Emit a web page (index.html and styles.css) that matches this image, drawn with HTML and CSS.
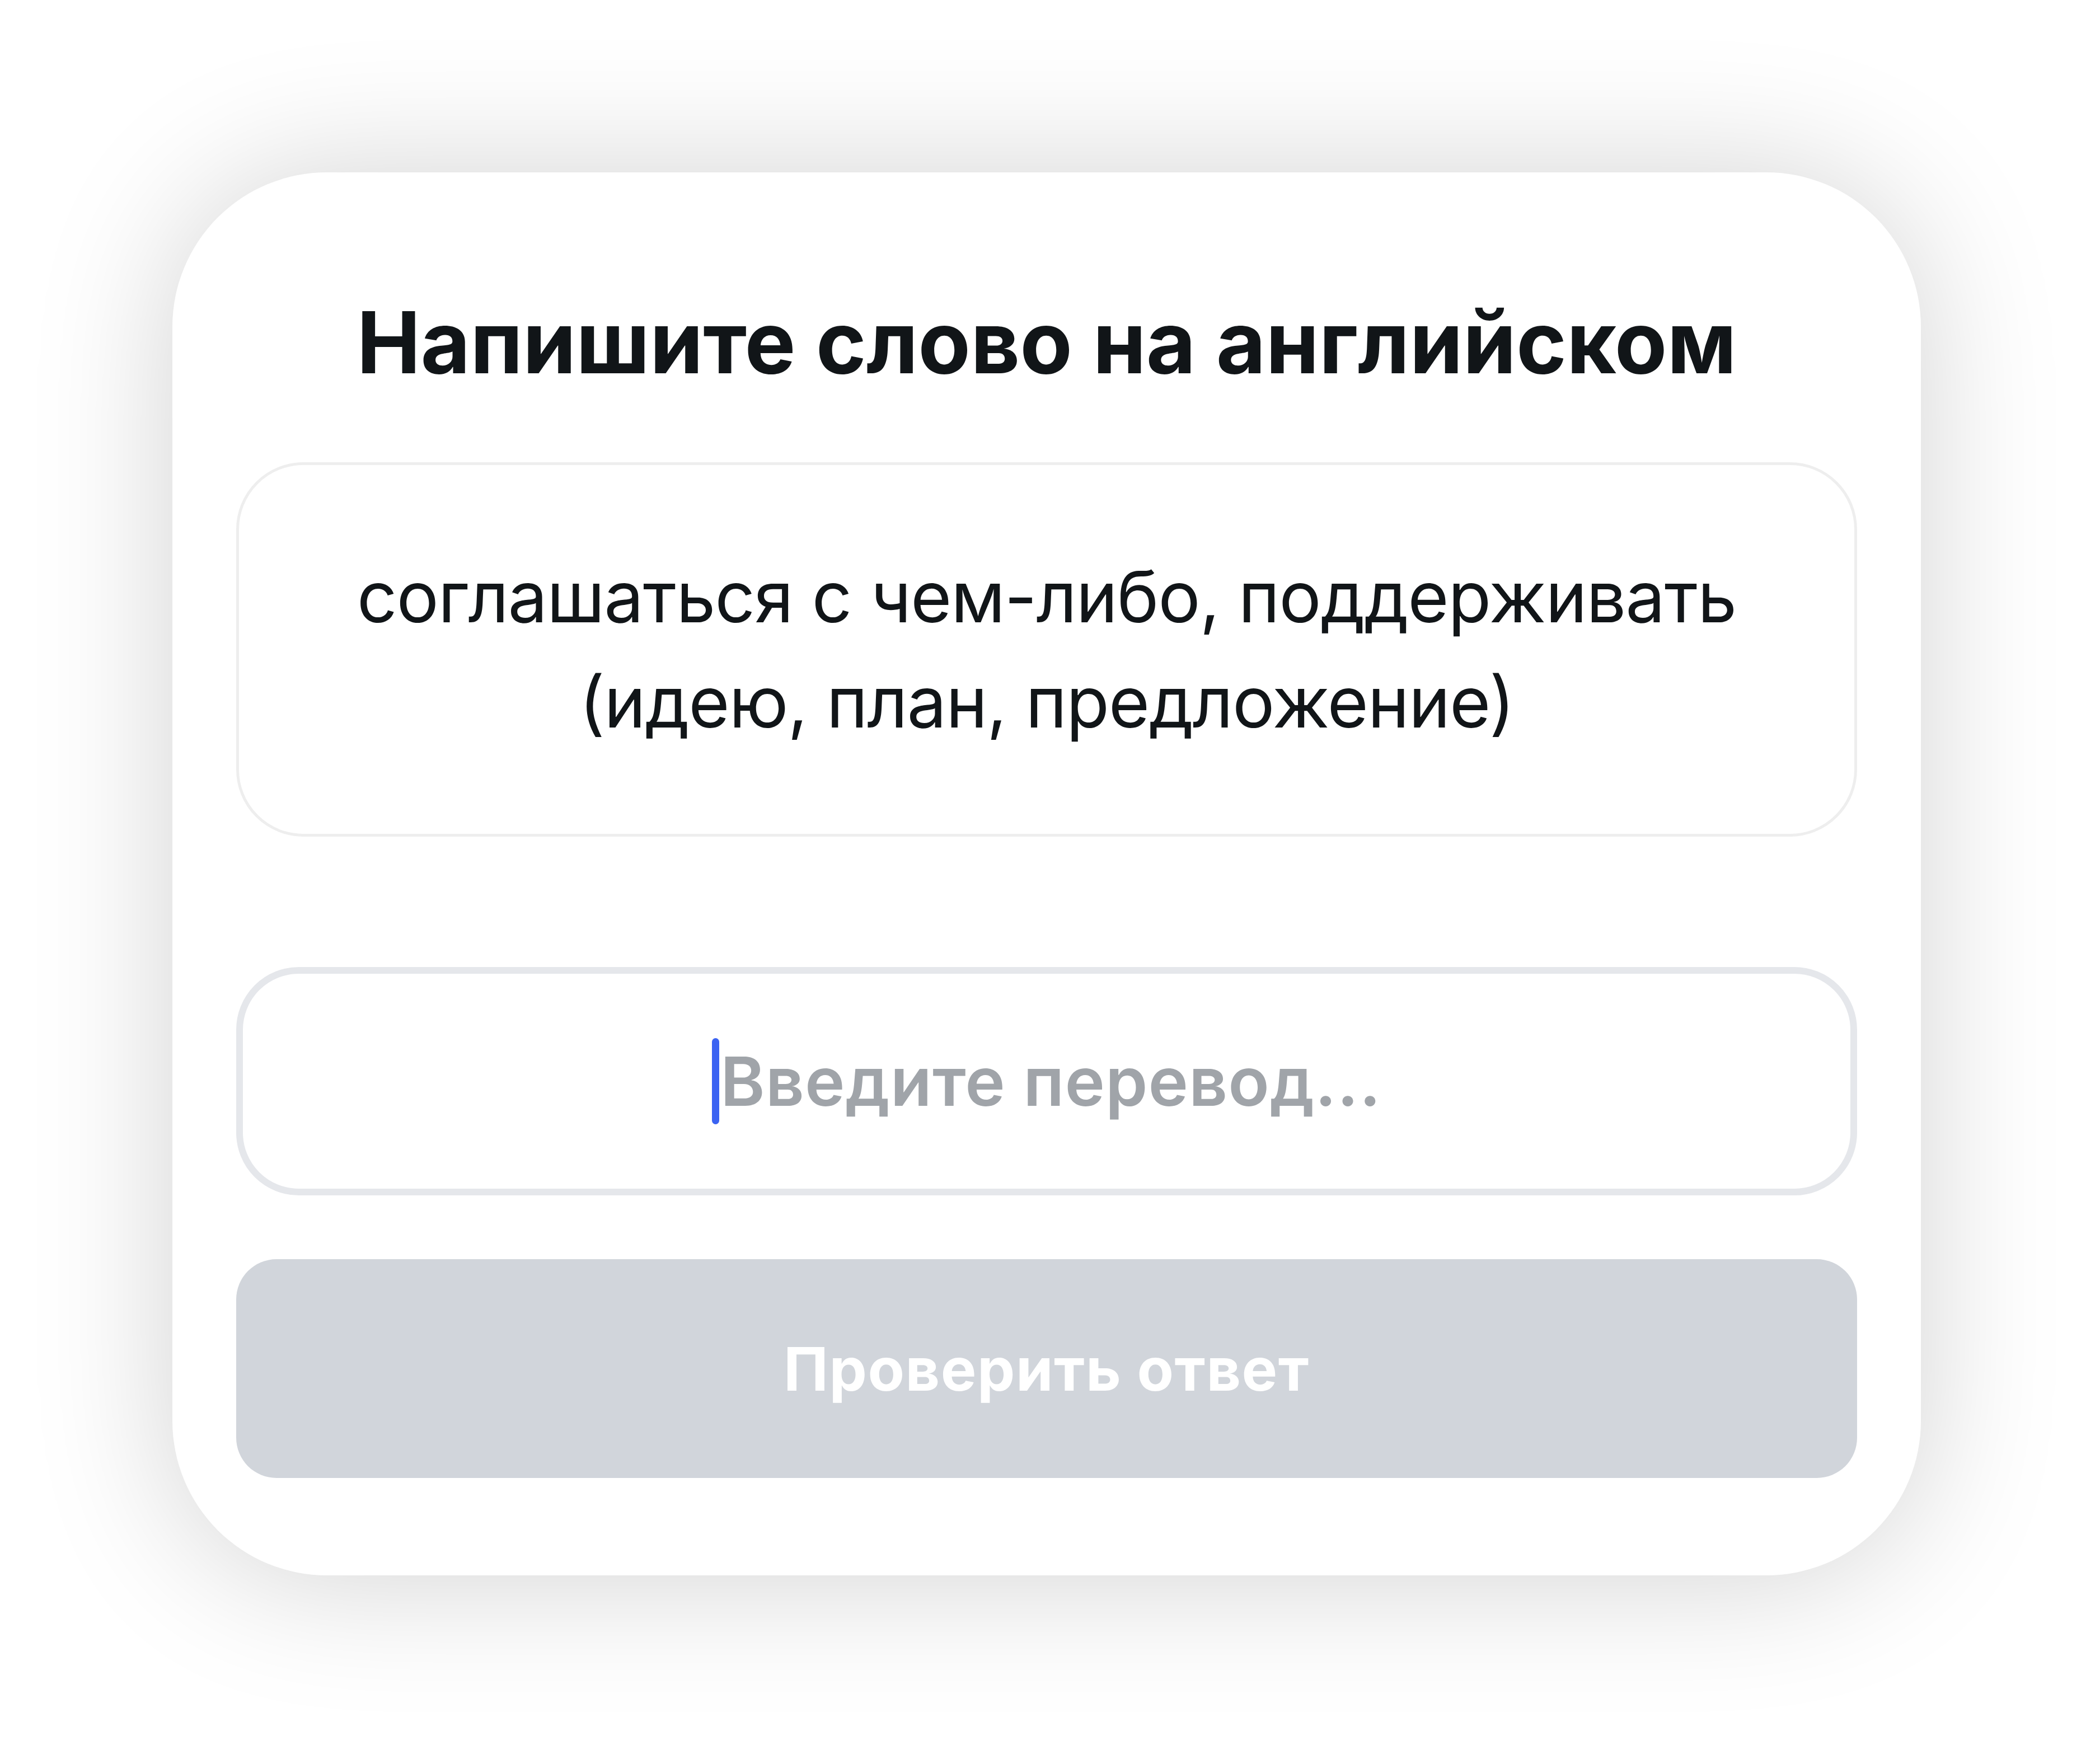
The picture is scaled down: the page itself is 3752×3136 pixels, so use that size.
FILE: index.html
```html
<!DOCTYPE html>
<html lang="ru">
<head>
<meta charset="utf-8">
<title>Напишите слово на английском</title>
<link rel="stylesheet" href="styles.css">
</head>
<body>
<main class="card">
  <h1 class="title">Напишите слово на английском</h1>
  <div class="prompt">
    <p class="prompt-text">соглашаться с чем-либо, поддерживать (идею, план, предложение)</p>
  </div>
  <div class="answer">
    <span class="caret"></span><span class="placeholder">Введите перевод...</span>
  </div>
  <button class="check" type="button">Проверить ответ</button>
</main>
</body>
</html>
```

FILE: styles.css
```css
html, body {
  margin: 0;
  padding: 0;
  background: #ffffff;
}

body {
  width: 3752px;
  height: 3136px;
  padding: 308px 0 0 308px;
  box-sizing: border-box;
  font-family: Inter, "Noto Sans", "Liberation Sans", sans-serif;
  color: #111518;
  overflow: hidden;
}

.card {
  width: 3124px;
  height: 2507px;
  box-sizing: border-box;
  background: #ffffff;
  border-radius: 276px;
  box-shadow: 0 4px 250px 0 rgba(0, 0, 0, 0.18);
  padding: 212px 114px 174px;
  display: flex;
  flex-direction: column;
}

.title {
  margin: 0 0 122px;
  font-size: 153px;
  line-height: 1.2;
  font-weight: 700;
  text-align: center;
  letter-spacing: 0;
}

.prompt {
  height: 670px;
  box-sizing: border-box;
  border: 5px solid #eeeeee;
  border-radius: 120px;
  display: flex;
  align-items: center;
  justify-content: center;
  padding: 0 160px;
}

.prompt-text {
  margin: 0;
  font-size: 126px;
  line-height: 188px;
  font-weight: 400;
  text-align: center;
  letter-spacing: -1.3px;
}

.answer {
  margin-top: 233px;
  height: 408px;
  box-sizing: border-box;
  border: 12px solid #e5e7eb;
  border-radius: 112px;
  display: flex;
  align-items: center;
  justify-content: center;
}

.caret {
  width: 13px;
  height: 154px;
  border-radius: 7px;
  background: #3b63f2;
  margin-right: 2px;
}

.placeholder {
  font-size: 121px;
  font-weight: 600;
  color: #a0a4a9;
  line-height: 1;
  letter-spacing: 1px;
}

.check {
  margin-top: 114px;
  height: 391px;
  border: none;
  border-radius: 72px;
  background: #d1d5db;
  color: #ffffff;
  font-family: Inter, "Noto Sans", "Liberation Sans", sans-serif;
  font-size: 107px;
  font-weight: 700;
  letter-spacing: 1.5px;
  padding: 0;
}
```
